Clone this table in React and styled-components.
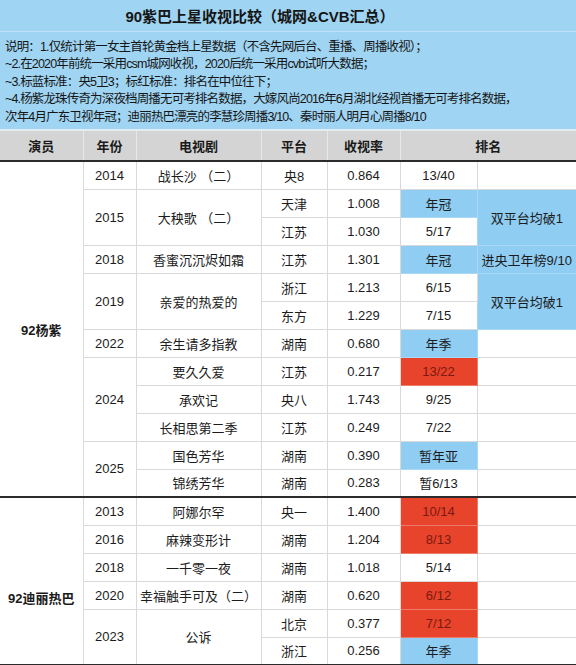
import React from 'react';
import styled, { createGlobalStyle } from 'styled-components';

const GlobalStyle = createGlobalStyle`
  body {
    margin: 0;
    background: #fff;
    font-family: "Liberation Sans", "Noto Sans CJK SC", sans-serif;
  }
`;

const yangZi = [
  { year: ['2014', 1], show: ['战长沙 （二）', 1], tv: '央8', rate: '0.864', rank: '13/40', extra: ['', 1] },
  { year: ['2015', 2], show: ['大秧歌 （二）', 2], tv: '天津', rate: '1.008', rank: '年冠', tone: 'blue', extra: ['双平台均破1', 2, 'blue'] },
  { tv: '江苏', rate: '1.030', rank: '5/17' },
  { year: ['2018', 1], show: ['香蜜沉沉烬如霜', 1], tv: '江苏', rate: '1.301', rank: '年冠', tone: 'blue', extra: ['进央卫年榜9/10', 1, 'blue'] },
  { year: ['2019', 2], show: ['亲爱的热爱的', 2], tv: '浙江', rate: '1.213', rank: '6/15', extra: ['双平台均破1', 2, 'blue'] },
  { tv: '东方', rate: '1.229', rank: '7/15' },
  { year: ['2022', 1], show: ['余生请多指教', 1], tv: '湖南', rate: '0.680', rank: '年季', tone: 'blue', extra: ['', 1] },
  { year: ['2024', 3], show: ['要久久爱', 1], tv: '江苏', rate: '0.217', rank: '13/22', tone: 'red', extra: ['', 1] },
  { show: ['承欢记', 1], tv: '央八', rate: '1.743', rank: '9/25', extra: ['', 1] },
  { show: ['长相思第二季', 1], tv: '江苏', rate: '0.249', rank: '7/22', extra: ['', 1] },
  { year: ['2025', 2], show: ['国色芳华', 1], tv: '湖南', rate: '0.390', rank: '暂年亚', tone: 'blue', extra: ['', 1] },
  { show: ['锦绣芳华', 1], tv: '湖南', rate: '0.283', rank: '暂6/13', extra: ['', 1] },
];

const dilraba = [
  { year: ['2013', 1], show: ['阿娜尔罕', 1], tv: '央一', rate: '1.400', rank: '10/14', tone: 'red', extra: ['', 1] },
  { year: ['2016', 1], show: ['麻辣变形计', 1], tv: '湖南', rate: '1.204', rank: '8/13', tone: 'red', extra: ['', 1] },
  { year: ['2018', 1], show: ['一千零一夜', 1], tv: '湖南', rate: '1.018', rank: '5/14', extra: ['', 1] },
  { year: ['2020', 1], show: ['幸福触手可及（二）', 1], tv: '湖南', rate: '0.620', rank: '6/12', tone: 'red', extra: ['', 1] },
  { year: ['2023', 2], show: ['公诉', 2], tv: '北京', rate: '0.377', rank: '7/12', tone: 'red', extra: ['', 1] },
  { tv: '浙江', rate: '0.256', rank: '年季', tone: 'blue', extra: ['', 1] },
];

const heads = ['演员', '年份', '电视剧', '平台', '收视率'];

const Group = ({ actor, rows, lift }) =>
  rows.map((r, i) => {
    const ends = (span) => i + span === rows.length;
    const last = i === rows.length - 1;
    return (
      <Row key={i}>
        {i === 0 && (
          <ActorCell rowSpan={rows.length} $lift={lift}>
            {actor}
          </ActorCell>
        )}
        {r.year && (
          <Cell rowSpan={r.year[1]} $end={ends(r.year[1])}>
            {r.year[0]}
          </Cell>
        )}
        {r.show && (
          <Cell rowSpan={r.show[1]} $end={ends(r.show[1])}>
            {r.show[0]}
          </Cell>
        )}
        <Cell $end={last}>{r.tv}</Cell>
        <Cell $end={last}>{r.rate}</Cell>
        <Cell $tone={r.tone} $end={last}>
          {r.rank}
        </Cell>
        {r.extra && (
          <Cell $tone={r.extra[2]} rowSpan={r.extra[1]} $end={ends(r.extra[1])} $edge>
            {r.extra[0]}
          </Cell>
        )}
      </Row>
    );
  });

export default function App() {
  return (
    <Sheet>
      <GlobalStyle />
      <TitleBar>90紫巴上星收视比较（城网&CVB汇总）</TitleBar>
      <Notes>
        <p>说明：1.仅统计第一女主首轮黄金档上星数据（不含先网后台、重播、周播收视）；</p>
        <p>~2.在2020年前统一采用csm城网收视，2020后统一采用cvb试听大数据；</p>
        <p>~3.标蓝标准：央5卫3；标红标准：排名在中位往下；</p>
        <p>~4.杨紫龙珠传奇为深夜档周播无可考排名数据，大嫁风尚2016年6月湖北经视首播无可考排名数据，</p>
        <p>次年4月广东卫视年冠；迪丽热巴漂亮的李慧珍周播3/10、秦时丽人明月心周播8/10</p>
      </Notes>
      <Table>
        <colgroup>
          {[83, 53, 125, 66, 73, 77, 99].map((w, i) => (
            <col key={i} style={{ width: w }} />
          ))}
        </colgroup>
        <thead>
          <HeadRow>
            {heads.map((h) => (
              <Head key={h}>{h}</Head>
            ))}
            <Head colSpan={2}>排名</Head>
          </HeadRow>
        </thead>
        <tbody>
          <Group actor="92杨紫" rows={yangZi} />
          <Group actor="92迪丽热巴" rows={dilraba} lift={32} />
        </tbody>
      </Table>
    </Sheet>
  );
}

const Sheet = styled.div`
  width: 576px;
  height: 665px;
  overflow: hidden;
  color: #1c1c1c;
`;

const TitleBar = styled.h1`
  margin: 0;
  height: 31px;
  padding-right: 56px;
  display: flex;
  align-items: center;
  justify-content: center;
  background: #9fd4f2;
  border-bottom: 1px solid #bfe3f7;
  font-size: 15px;
  font-weight: 700;
  color: #151515;
`;

const Notes = styled.div`
  box-sizing: border-box;
  height: 99px;
  padding: 7px 0 0 5px;
  background: #9fd4f2;
  border-bottom: 2px solid #e3ecf1;
  font-size: 12.5px;
  line-height: 17.4px;
  letter-spacing: -0.85px;
  color: #161616;

  p {
    margin: 0;
    white-space: nowrap;
  }
`;

const Table = styled.table`
  width: 576px;
  table-layout: fixed;
  border-collapse: collapse;
  font-size: 13px;
`;

const Row = styled.tr`
  height: 28px;
`;

const HeadRow = styled.tr`
  height: 30px;
`;

const Head = styled.th`
  padding: 0;
  background: #d4d4d4;
  border: 1px solid #e8e8e8;
  border-top: 0;
  border-bottom: 2px solid #2b2b2b;
  font-weight: 700;
  color: #1a1a1a;
  &:first-child {
    border-left: 0;
  }
  &:last-child {
    border-right: 0;
  }
`;

const tones = {
  blue: { bg: '#8fcdf3', fg: '#1c1c1c', line: '#a8d8f5' },
  red: { bg: '#e8432b', fg: '#7a1a10', line: '#ee7a68' },
};

const Cell = styled.td`
  padding: 0;
  text-align: center;
  vertical-align: middle;
  white-space: nowrap;
  background: ${(p) => (p.$tone ? tones[p.$tone].bg : '#fff')};
  color: ${(p) => (p.$tone ? tones[p.$tone].fg : '#1c1c1c')};
  border: 1px solid ${(p) => (p.$tone ? tones[p.$tone].line : '#d9d9d9')};
  ${(p) => p.$edge && 'border-right: 0;'}
  ${(p) => p.$end && 'border-bottom: 2px solid #2b2b2b;'}
`;

const ActorCell = styled.td`
  padding: ${(p) => p.$lift || 0}px 0 0;
  text-align: center;
  vertical-align: middle;
  background: #fff;
  border: 1px solid #d9d9d9;
  border-left: 0;
  border-bottom: 2px solid #2b2b2b;
  font-weight: 700;
  color: #1a1a1a;
`;
